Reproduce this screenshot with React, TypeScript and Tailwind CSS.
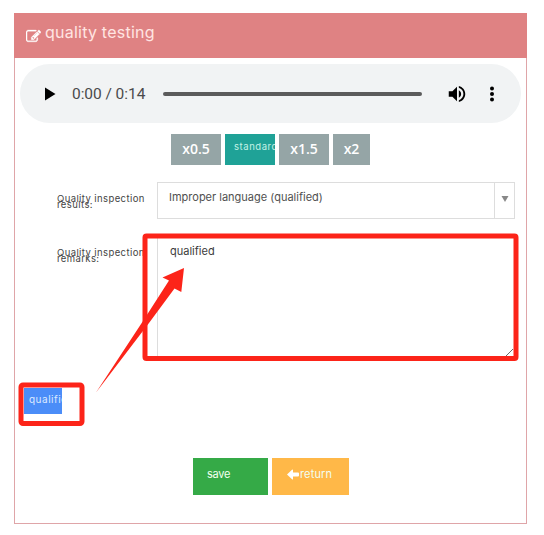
import React from 'react';

function EditIcon() {
  return (
    <svg className="mt-[5px] size-[15px] shrink-0" viewBox="0 0 1792 1792" fill="#fff" stroke="#fff" strokeWidth="40">
      <path d="M888 1184l116-116-152-152-116 116v56h96v96h56zm440-720q-16-16-33 1l-350 350q-17 17-1 33t33-1l350-350q17-17 1-33zm80 594v190q0 119-84.5 203.5t-203.5 84.5h-832q-119 0-203.5-84.5t-84.5-203.5v-832q0-119 84.5-203.5t203.5-84.5h832q63 0 117 25 15 7 18 23 3 17-9 29l-49 49q-14 14-32 8-23-6-45-6h-832q-66 0-113 47t-47 113v832q0 66 47 113t113 47h832q66 0 113-47t47-113v-126q0-13 9-22l64-64q15-15 35-7t20 29zm-96-738l288 288-672 672h-288v-288zm444 132l-92 92-288-288 92-92q28-28 68-28t68 28l152 152q28 28 28 68t-28 68z" />
    </svg>
  );
}

function Player() {
  return (
    <div className="mx-[5px] mt-[6px] flex h-[59px] items-center rounded-full bg-[#f1f3f4] pl-[25px] pr-[20px]">
      <svg className="h-[14px] w-[11px] shrink-0" viewBox="0 0 11 14"><path d="M0 0.5L10.5 7L0 13.5Z" /></svg>
      <span className="ml-4 w-[91px] shrink-0 whitespace-nowrap font-['Roboto',sans-serif] text-[15.5px] leading-5 tracking-[-0.05px] text-[#4a4a4b]">0:00 / 0:14</span>
      <div className="h-1 w-[259px] shrink-0 rounded-full bg-[#5b5b5b]" />
      <svg className="ml-[24px] size-[22px] shrink-0" viewBox="0 0 24 24"><path d="M3 9v6h4l5 5V4L7 9H3zm13.500 3c0-1.770-1.020-3.290-2.500-4.030v8.050c1.480-.73 2.500-2.250 2.500-4.020zM14 3.230v2.060c2.890.86 5 3.540 5 6.710s-2.110 5.850-5 6.710v2.060c4.010-.91 7-4.490 7-8.770s-2.990-7.860-7-8.770z" /></svg>
      <svg className="ml-[12px] size-6 shrink-0" viewBox="0 0 24 24"><circle cx="12" cy="6.500" r="2" /><circle cx="12" cy="12" r="2" /><circle cx="12" cy="17.500" r="2" /></svg>
    </div>
  );
}

const speed = "h-[31px] w-[50px] bg-[#95a5a6] pb-[2px] text-center font-['Open_Sans',sans-serif] text-[14px] font-semibold leading-[20px] text-white";

function FieldLabel({ second }: { second: string }) {
  return (
    <div className="w-[100px] shrink-0 whitespace-nowrap pt-[14px] text-[9.5px] leading-[6px] tracking-[0.4px] text-[#444]">
      Quality inspection<br />{second}
    </div>
  );
}

export default function App() {
  return (
    <div className="relative h-[535px] w-[544px] overflow-hidden bg-white pl-[14px] pt-[13px] font-['Inter',sans-serif]">
      <div className="h-[511px] w-[513px] border border-[#dfa5a8]">
        <div className="-mx-px -mt-px flex h-[45px] bg-[#df8283] pl-[12px] pt-[11px]">
          <EditIcon />
          <h1 className="ml-[4px] -mt-[1px] text-[16px] leading-[18px] tracking-[0.23px] text-[#ffe5e2]">quality testing</h1>
        </div>
        <Player />
        <div className="ml-[156px] mt-[11px] flex gap-1">
          <button className={speed}>x0.5</button>
          <button className="h-[31px] w-[50px] overflow-hidden whitespace-nowrap bg-[#1fa297] pb-[4px] pl-[9px] text-left text-[9.5px] tracking-[0.55px] text-[#c3f2e6]">standard</button>
          <button className={speed}>x1.5</button>
          <button className="h-[31px] w-[37px] bg-[#95a5a6] pb-[2px] text-center font-['Open_Sans',sans-serif] text-[14px] font-semibold leading-[20px] text-white">x2</button>
        </div>
        <div className="ml-[42px] mt-[17px] flex">
          <FieldLabel second="results:" />
          <div className="flex h-[37px] w-[358px] border border-[#ddd] text-[11px] leading-[14px] text-[#505050]">
            <span className="flex-1 pl-[11px] pt-[7px] tracking-[0]">Improper language (qualified)</span>
            <span className="flex w-[20px] justify-center border-l border-[#ddd] pt-[13px]">
              <svg className="h-[6px] w-[8px]" viewBox="0 0 8 6"><path d="M.5 0h7L4 6z" fill="#888" /></svg>
            </span>
          </div>
        </div>
        <div className="ml-[42px] mt-[17px] flex">
          <FieldLabel second="remarks:" />
          <div className="flex h-[121px] w-[358px] items-start justify-between border border-[#ddd] pl-[12px] pt-[7px] text-[11px] leading-[14px] tracking-[0] text-[#3c3c3c]">
            <span>qualified</span>
            <svg className="mr-px self-end size-[7px]" viewBox="0 0 8 8" stroke="#555" strokeWidth="1"><path d="M0 8L8 0" /></svg>
          </div>
        </div>
        <div className="ml-[9px] mt-[31px] h-[26px] w-[38px] overflow-hidden whitespace-nowrap bg-[#4b8df8] pl-[5px] pt-[4px] text-[10px] leading-[14px] tracking-[0.5px] text-[#dceaff]">qualified</div>
        <div className="ml-[178px] mt-[44px] flex gap-1 text-[11px] leading-[14px] text-[#f2fff0]">
          <button className="flex h-[37px] w-[75px] bg-[#35aa47] pl-[14px] pt-[9px] tracking-[-0.3px]">save</button>
          <button className="flex h-[37px] w-[77px] bg-[#ffb848] pl-[14px] pt-[9px]">
            <svg className="mt-[2px] h-[11px] w-[14px]" viewBox="0 0 14 11"><path d="M1 5.500L6 .7Q7 0 7 1.300V3.500H12Q13 3.500 13 4.500V6.500Q13 7.500 12 7.500H7V9.700Q7 11 6 10.300Z" fill="#fff" /></svg>
            <span className="tracking-[0.15px]">return</span>
          </button>
        </div>
      </div>
      <svg className="pointer-events-none absolute left-0 top-0 h-[535px] w-[544px]" viewBox="0 0 544 535">
        <g fill="none" stroke="#fc2419" strokeWidth="5">
          <rect x="145" y="236" width="371" height="122.500" rx="1.500" />
          <rect x="21" y="385" width="61" height="38.500" rx="2" />
        </g>
        <path d="M96 392.500L143 321L169 280.500L162.500 277.500L184 268L181.300 292L174.500 288.500L149 323Z" fill="#fc2419" />
      </svg>
    </div>
  );
}
